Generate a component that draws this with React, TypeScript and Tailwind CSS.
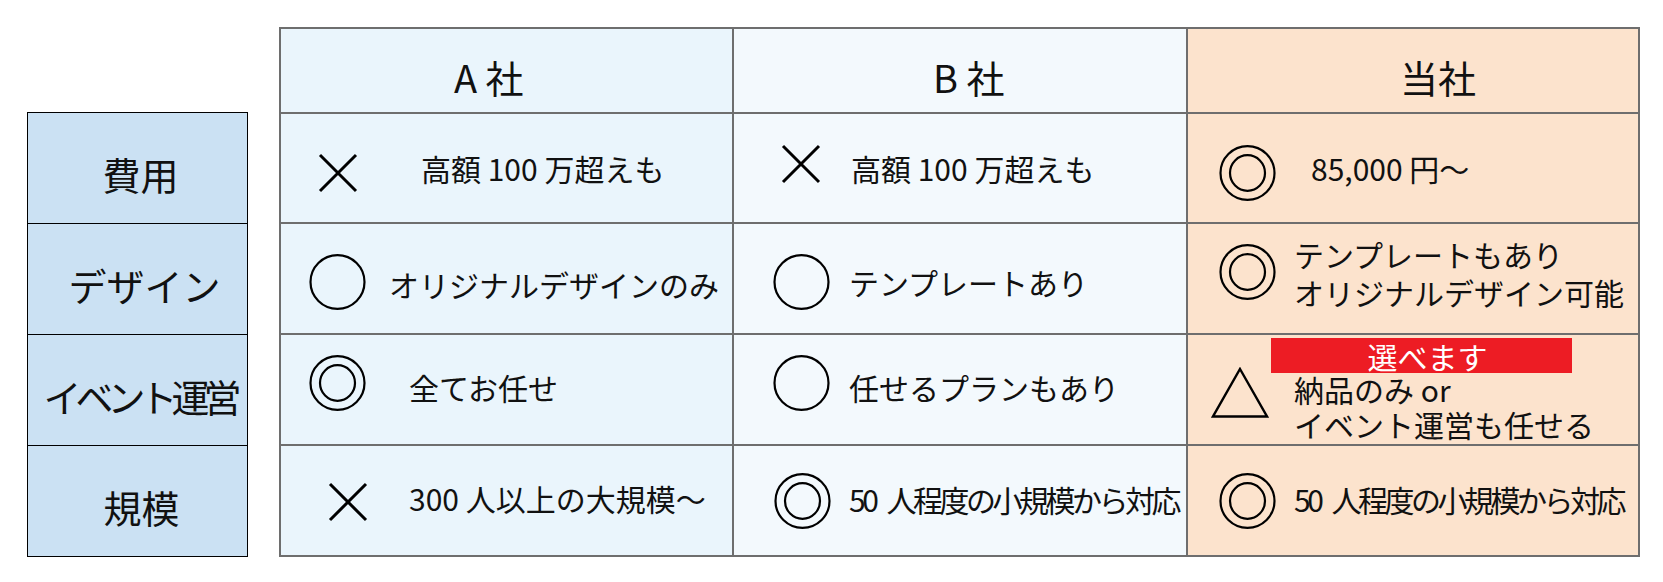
import React from 'react'

type Mark = 'cross' | 'circle' | 'double' | 'triangle'

interface Cell {
  mark: Mark
  iconCls: string
  textCls: string
  lines: string[]
}

function MarkIcon({ mark }: { mark: Mark }) {
  if (mark === 'cross') {
    return (
      <svg width="40" height="40" viewBox="0 0 40 40">
        <path d="M2 2L38 38M38 2L2 38" stroke="#000" strokeWidth="3" fill="none" />
      </svg>
    )
  }
  if (mark === 'circle') {
    return (
      <svg width="57" height="56" viewBox="0 0 57 56">
        <ellipse cx="28.5" cy="28" rx="27" ry="26.8" stroke="#000" strokeWidth="2.2" fill="none" />
      </svg>
    )
  }
  if (mark === 'double') {
    return (
      <svg width="57" height="56" viewBox="0 0 57 56">
        <ellipse cx="28.5" cy="28" rx="27" ry="26.8" stroke="#000" strokeWidth="2.2" fill="none" />
        <ellipse cx="28.5" cy="28" rx="17.5" ry="17.8" stroke="#000" strokeWidth="2.2" fill="none" />
      </svg>
    )
  }
  return (
    <svg width="58" height="51" viewBox="0 0 58 51">
      <path d="M29 2L56 49.5H2Z" stroke="#000" strokeWidth="2.4" fill="none" strokeLinejoin="miter" />
    </svg>
  )
}

const labels = [
  { text: '費用', cls: 'pl-[6px]' },
  { text: 'デザイン', cls: 'pl-[14px]' },
  { text: 'イベント運営', cls: 'pl-[4px] tracking-[-6px]' },
  { text: '規模', cls: 'pl-[8px]' },
]

// columns: A社, B社, 当社 — row 3 of 当社 is drawn separately
const rows: (Cell | null)[][] = [
  [
    { mark: 'cross', iconCls: 'ml-[37px] mt-[10px]', textCls: 'ml-[63px]', lines: ['高額 100 万超えも'] },
    { mark: 'cross', iconCls: 'ml-[47px] mb-[9px]', textCls: 'ml-[30px]', lines: ['高額 100 万超えも'] },
    { mark: 'double', iconCls: 'ml-[31px] mt-[9px]', textCls: 'ml-[35px]', lines: ['85,000 円〜'] },
  ],
  [
    { mark: 'circle', iconCls: 'ml-[28px] mt-[6px]', textCls: 'ml-[23px] mt-[10px]', lines: ['オリジナルデザインのみ'] },
    { mark: 'circle', iconCls: 'ml-[39px] mt-[6px]', textCls: 'ml-[19px] mt-[6px]', lines: ['テンプレートあり'] },
    { mark: 'double', iconCls: 'ml-[31px] mb-[14px]', textCls: 'ml-[18px] mb-[11px]', lines: ['テンプレートもあり', 'オリジナルデザイン可能'] },
  ],
  [
    { mark: 'double', iconCls: 'ml-[28px] mb-[13px]', textCls: 'ml-[43px] mb-[6px]', lines: ['全てお任せ'] },
    { mark: 'circle', iconCls: 'ml-[39px] mb-[14px]', textCls: 'ml-[19px] mb-[6px]', lines: ['任せるプランもあり'] },
    null,
  ],
  [
    { mark: 'cross', iconCls: 'ml-[47px] mt-[2px]', textCls: 'ml-[41px] mb-[5px]', lines: ['300 人以上の大規模〜'] },
    { mark: 'double', iconCls: 'ml-[40px]', textCls: 'ml-[18px] mb-[4px] tracking-[-3.5px] [word-spacing:8px]', lines: ['50 人程度の小規模から対応'] },
    { mark: 'double', iconCls: 'ml-[31px]', textCls: 'ml-[18px] mb-[4px] tracking-[-3.5px] [word-spacing:8px]', lines: ['50 人程度の小規模から対応'] },
  ],
]

const colBg = ['bg-[#eaf5fc]', 'bg-[#f3f9fd]', 'bg-[#fce3cd]']

export default function App() {
  return (
    <div className="min-h-screen bg-white text-[#111] font-['Noto_Sans_CJK_JP','Noto_Sans',sans-serif]">
      <div className="flex pl-[27px] pt-[27px]">
        {/* row labels */}
        <div className="mt-[85px] w-[221px] grid grid-rows-[110px_110px_110px_110px] gap-px bg-black p-px self-start">
          {labels.map((l) => (
            <div key={l.text} className={`bg-[#cbe1f3] flex items-center justify-center pt-[12px] text-[38px] leading-none ${l.cls}`}>
              {l.text}
            </div>
          ))}
        </div>

        {/* comparison table */}
        <div className="ml-[31px] w-[1361px] grid grid-cols-[451px_452px_450px] grid-rows-[83px_108px_109px_109px_109px] gap-[2px] bg-[#6e6e6e] p-[2px]">
          <div className={`${colBg[0]} flex items-center pl-[173px] pt-[13px] text-[38px] leading-none`}>A 社</div>
          <div className={`${colBg[1]} flex items-center pl-[199px] pt-[13px] text-[38px] leading-none`}>B 社</div>
          <div className={`${colBg[2]} flex items-center pl-[212px] pt-[13px] text-[38px] leading-none`}>当社</div>

          {rows.map((row, ri) =>
            row.map((cell, ci) => {
              if (!cell) {
                return (
                  <div key={`${ri}-${ci}`} className={`${colBg[ci]} relative flex items-start`}>
                    <div className="absolute left-[83px] top-[3px] w-[301px] h-[35px] bg-[#ed1c24] flex items-center justify-center pl-[12px] text-white text-[30px] leading-none">
                      選べます
                    </div>
                    <div className="ml-[23px] mt-[32px]">
                      <MarkIcon mark="triangle" />
                    </div>
                    <div className="ml-[25px] mt-[37px] text-[30px] leading-[35px] whitespace-nowrap">
                      <div>納品のみ or</div>
                      <div>イベント運営も任せる</div>
                    </div>
                  </div>
                )
              }
              return (
                <div key={`${ri}-${ci}`} className={`${colBg[ci]} flex items-center`}>
                  <div className={`shrink-0 ${cell.iconCls}`}>
                    <MarkIcon mark={cell.mark} />
                  </div>
                  <div
                    className={`text-[30px] whitespace-nowrap ${cell.lines.length > 1 ? 'leading-[38px]' : 'leading-none'} ${cell.textCls}`}
                  >
                    {cell.lines.map((t) => (
                      <div key={t}>{t}</div>
                    ))}
                  </div>
                </div>
              )
            })
          )}
        </div>
      </div>
    </div>
  )
}
